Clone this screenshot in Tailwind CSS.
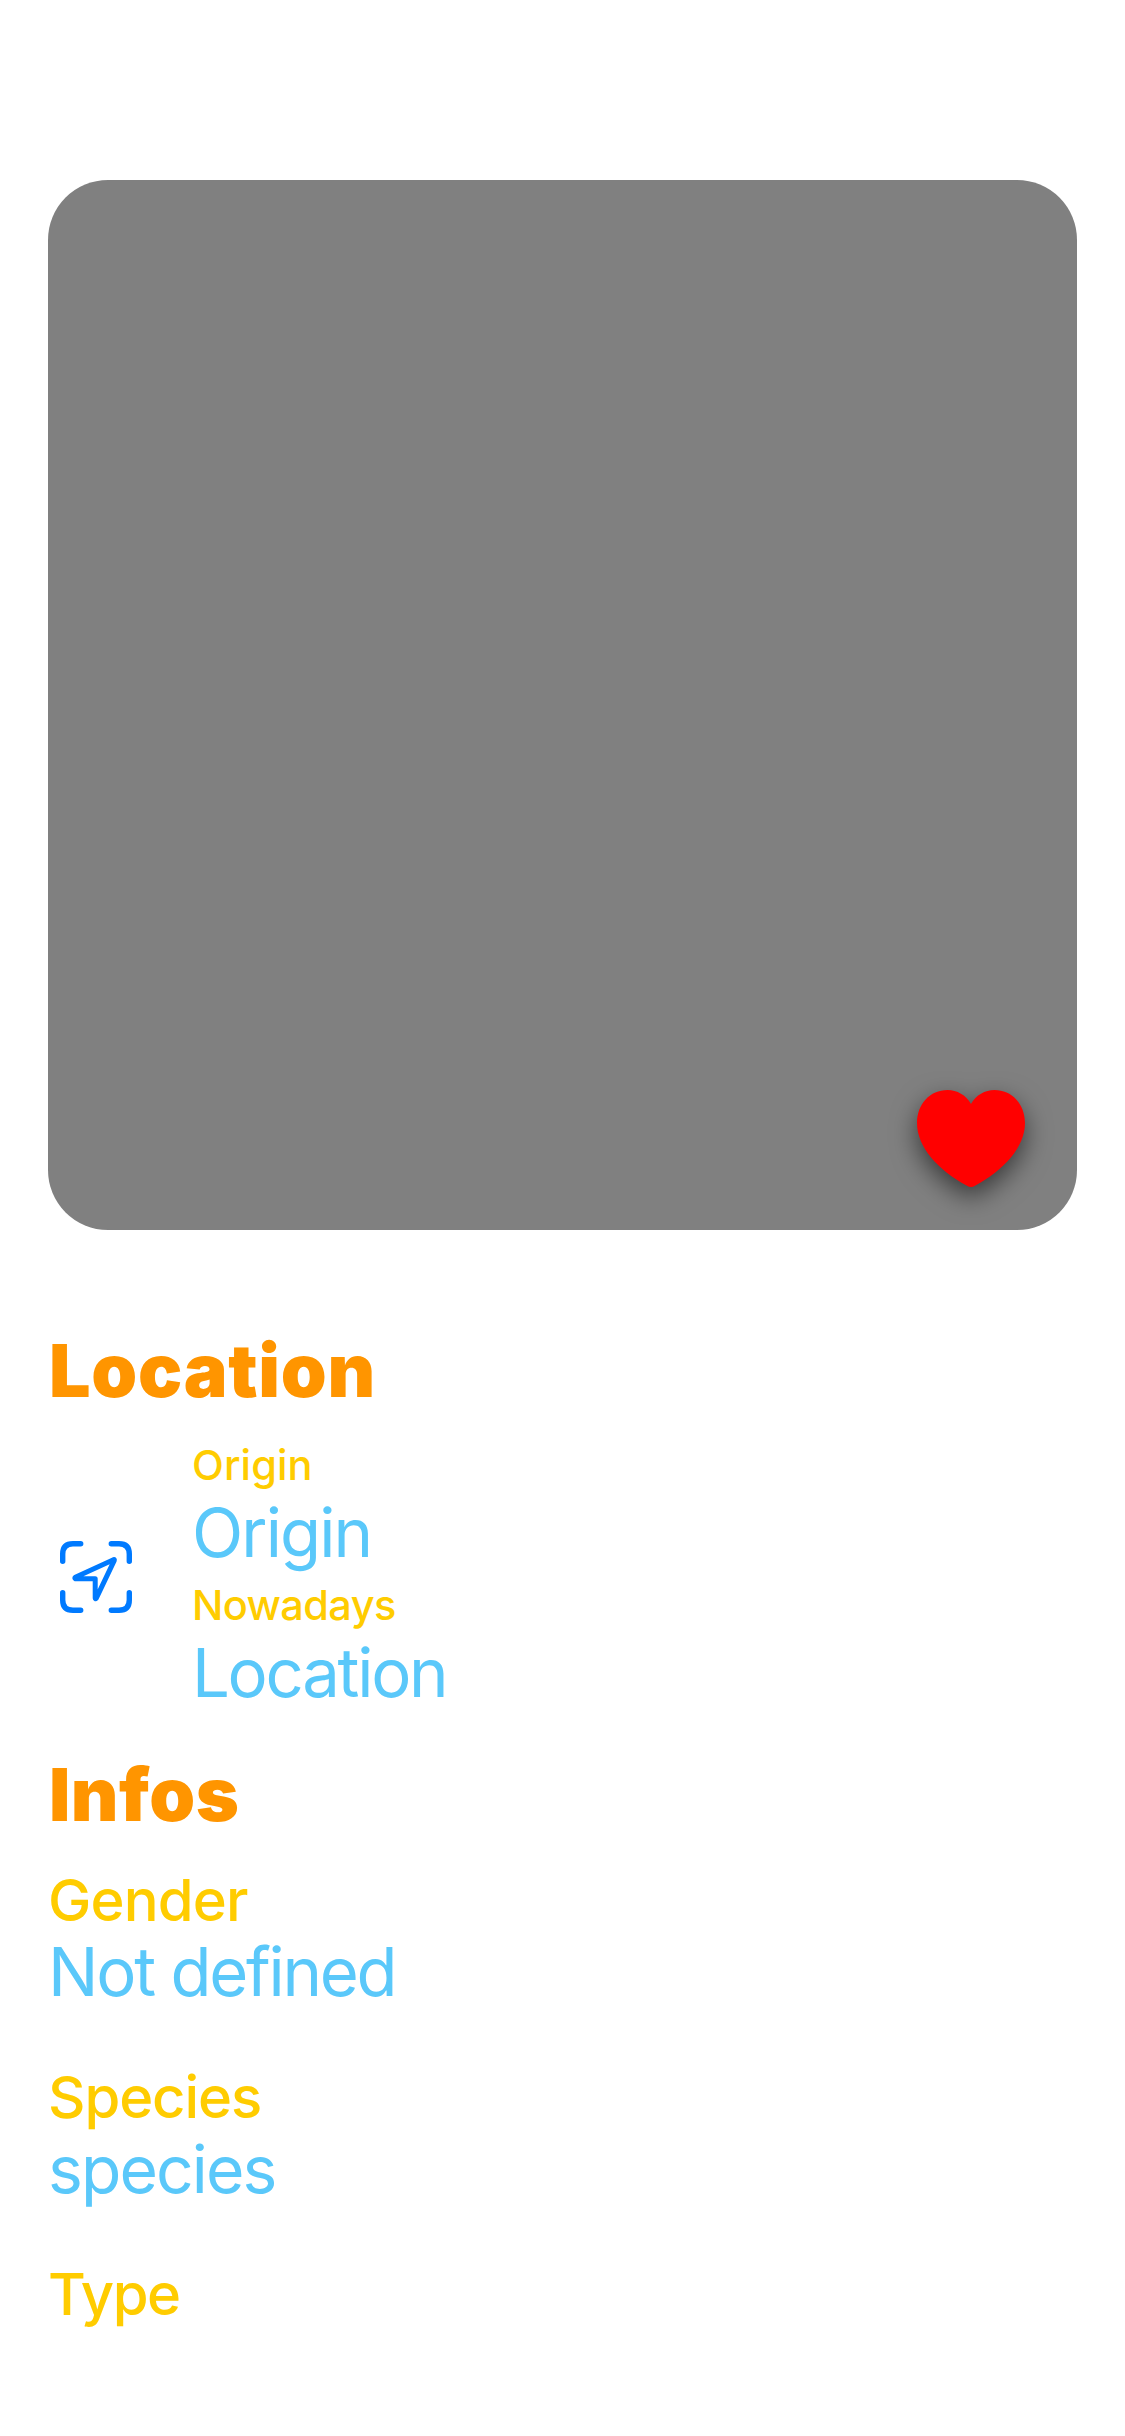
<!DOCTYPE html>
<html lang="en">
<head>
<meta charset="utf-8">
<title>Character</title>
<script src="https://cdn.jsdelivr.net/npm/@tailwindcss/browser@4"></script>
</head>
<body class="bg-white font-['Inter',sans-serif]">
<main class="flex h-[2436px] flex-col overflow-hidden px-12 pt-[180px] whitespace-nowrap">
  <!-- Portrait with favourite button -->
  <div class="flex h-[1050px] w-[1029px] shrink-0 items-end justify-end rounded-[60px] bg-[#808080] pr-[42px] pb-[33px]">
    <svg class="h-[117px] w-[128px] overflow-visible drop-shadow-[0_10px_13px_rgba(0,0,0,0.55)]" viewBox="907 1080 128 117" fill="#ff0000">
      <path d="M971 1104C966 1095 957 1090 947.500 1090C930 1090 917 1104 917 1123C917 1147 938 1170 967 1185.800Q971 1188.200 975 1185.800C1004 1170 1025 1147 1025 1123C1025 1104 1012 1090 994.500 1090C985 1090 976 1095 971 1104Z"/>
    </svg>
  </div>

  <h2 class="mt-[96px] ml-px text-[73.5px] leading-[90px] font-black tracking-[0.72px] text-[#ff9500]">Location</h2>
  <div class="mt-[19px] flex items-center">
    <svg class="mt-[8px] ml-3 h-[72px] w-[72px] shrink-0" viewBox="60 1541 72 72" fill="none" stroke="#007aff" stroke-linecap="round" stroke-linejoin="round" stroke-width="5.400">
      <path d="M62.700 1561.300V1554Q62.700 1543.700 73 1543.700H80.700M111.300 1543.700H119Q129.300 1543.700 129.300 1554V1561.300M129.300 1592.700V1600Q129.300 1610.300 119 1610.300H111.300M80.700 1610.300H73Q62.700 1610.300 62.700 1600V1592.700"/>
      <path stroke-width="5" d="M75.300 1577.200L113.500 1559.700Q114.800 1559.300 114.200 1560.700L96.200 1598.300Q95.300 1599.500 95.200 1598V1578.800H75.500Q74.200 1578 75.300 1577.200Z"/>
    </svg>
    <dl class="ml-[60px]">
      <dt class="text-[41.5px] leading-[60px] font-medium tracking-[0.1px] text-[#ffcc00]">Origin</dt>
      <dd class="text-[67px] leading-[76px] tracking-[-1.9px] text-[#5ac8fa]">Origin</dd>
      <dt class="mt-1 text-[41.5px] leading-[60px] font-medium tracking-[-0.6px] text-[#ffcc00]">Nowadays</dt>
      <dd class="text-[67px] leading-[76px] tracking-[-2.27px] text-[#5ac8fa]">Location</dd>
    </dl>
  </div>

  <h2 class="mt-[39px] ml-px text-[73.5px] leading-[90px] font-black tracking-[0.44px] text-[#ff9500]">Infos</h2>
  <dl class="mt-[26px] flex flex-col gap-[53px]">
    <div>
      <dt class="text-[58px] leading-[68px] font-medium tracking-[-0.85px] text-[#ffcc00]">Gender</dt>
      <dd class="text-[67px] leading-[76px] tracking-[-2.26px] text-[#5ac8fa]">Not defined</dd>
    </div>
    <div>
      <dt class="text-[58px] leading-[68px] font-medium tracking-[-1.09px] text-[#ffcc00]">Species</dt>
      <dd class="text-[66px] leading-[76px] tracking-[-1.9px] text-[#5ac8fa]">species</dd>
    </div>
    <div>
      <dt class="text-[58px] leading-[68px] font-medium tracking-[-1.48px] text-[#ffcc00]">Type</dt>
    </div>
  </dl>
</main>
</body>
</html>
